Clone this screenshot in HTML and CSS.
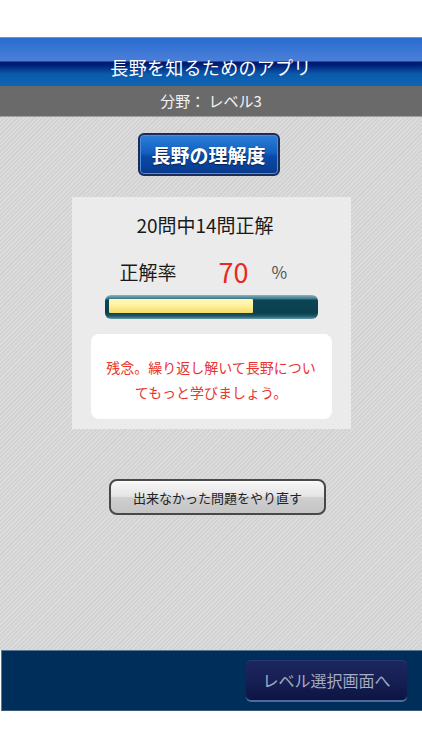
FILE: index.html
```html
<!DOCTYPE html>
<html lang="ja">
<head>
<meta charset="utf-8">
<title>長野を知るためのアプリ</title>
<link rel="stylesheet" href="styles.css">
</head>
<body>
<div class="top-space"></div>
<header class="titlebar"><h1 class="title">長野を知るためのアプリ</h1></header>
<div class="subbar">分野： レベル3</div>
<main class="content">
  <button class="primary-btn">長野の理解度</button>
  <section class="panel">
    <p class="score">20問中14問正解</p>
    <div class="rate-row">
      <span class="rate-label">正解率</span>
      <span class="rate-value">70</span>
      <span class="rate-unit">%</span>
    </div>
    <div class="bar"><div class="bar-fill" style="width:70.5%"></div></div>
    <div class="message">残念。繰り返し解いて長野につい<br>てもっと学びましょう。</div>
  </section>
  <div class="retry-wrap"><button class="retry-btn">出来なかった問題をやり直す</button></div>
</main>
<footer class="footer"><button class="back-btn">レベル選択画面へ</button></footer>
</body>
</html>
```
FILE: styles.css
```css
* { box-sizing: border-box; }
html, body { margin: 0; padding: 0; background: #ffffff; }
body {
  width: 422px;
  font-family: "Noto Sans CJK JP", "Noto Sans", sans-serif;
}
.top-space { height: 37px; }
.titlebar {
  height: 49px;
  background: linear-gradient(to bottom, #2a6cd0 0px, #4a7fd8 23px, #00186c 24px, #001f78 27px, #0b5aac 36px, #1066b4 49px);
  border-top: 1px solid #6a94d8;
  display: flex;
  align-items: center;
  justify-content: center;
  padding-top: 10px;
}
.title {
  margin: 0;
  font-size: 18px;
  font-weight: 400;
  color: #ffffff;
  letter-spacing: 0.3px;
}
.subbar {
  height: 31px;
  background: #6a6a6a;
  border-bottom: 1px solid #a0a0a0;
  color: #f2f2f2;
  font-size: 15px;
  display: flex;
  align-items: center;
  justify-content: center;
  padding-bottom: 1px;
}
.content {
  height: 533px;
  background: repeating-linear-gradient(135deg, #d2d2d2 0px, #d2d2d2 1.5px, #dcdcdc 1.5px, #dcdcdc 3px);
  display: flex;
  flex-direction: column;
  align-items: center;
  padding-top: 16px;
}
.primary-btn {
  width: 142px;
  height: 43px;
  border: 2px solid #1b2d56;
  border-radius: 6px;
  background: linear-gradient(to bottom, #2c7ed8 0%, #1460c0 45%, #0a4aa6 55%, #083a8c 100%);
  box-shadow: inset 0 0 0 1px #4d8de0;
  color: #ffffff;
  font-family: inherit;
  font-size: 19px;
  font-weight: 700;
  text-shadow: 0 1px 1px #0a2050;
  padding: 0;
  margin-right: 5px;
}
.panel {
  margin-top: 21px;
  width: 279px;
  height: 232px;
  background: #ebebeb;
  padding: 14px 19px 9px;
  display: flex;
  flex-direction: column;
}
.score {
  margin: 0;
  text-align: center;
  font-size: 19px;
  line-height: 28px;
  color: #1a1a1a;
  padding-right: 12px;
}
.rate-row {
  margin-top: 14px;
  height: 36px;
  display: flex;
  align-items: center;
}
.rate-label {
  margin-left: 29px;
  font-size: 19px;
  color: #1a1a1a;
}
.rate-value {
  margin-left: 42px;
  font-size: 27px;
  color: #e82a1e;
  line-height: 1;
}
.rate-unit {
  margin-left: 23px;
  font-size: 17px;
  color: #555555;
}
.bar {
  margin: 6px auto 0;
  width: 213px;
  height: 24px;
  border-radius: 6px;
  background: linear-gradient(to bottom, #86b4c2 0px, #3a7486 4px, #0b4656 5px, #0a3f4e 18px, #1b5868 21px, #6a98a6 24px);
  padding: 4px 4px;
}
.bar-fill {
  height: 14px;
  background: linear-gradient(to bottom, #fff9b8 0%, #fff2a0 45%, #f4dc66 100%);
  border-radius: 1px;
}
.message {
  margin-top: 15px;
  height: 85px;
  background: #ffffff;
  border-radius: 8px;
  padding: 21px 8px 0;
  text-align: center;
  color: #e83530;
  font-size: 14px;
  line-height: 25px;
}
.retry-wrap {
  margin-top: 50px;
  padding-left: 13px;
}
.retry-btn {
  width: 217px;
  height: 36px;
  border: 2px solid #484848;
  border-radius: 8px;
  background: linear-gradient(to bottom, #f8f8f8 0%, #e4e4e4 48%, #cfcfcf 52%, #c4c4c4 100%);
  box-shadow: inset 0 1px 0 #ffffff;
  color: #222222;
  font-family: inherit;
  font-size: 13px;
  padding: 0;
}
.footer {
  height: 61px;
  margin-left: 1px;
  background: #002e5a;
  border-top: 1px solid #5a7896;
  border-left: 1px solid #5a7896;
  border-bottom: 1px solid #3a5878;
  display: flex;
  justify-content: flex-end;
  align-items: flex-start;
  padding-top: 9px;
  padding-right: 15px;
}
.back-btn {
  width: 161px;
  height: 40px;
  border: none;
  border-radius: 5px;
  background: linear-gradient(to bottom, #1c2760 0%, #161f52 55%, #0d1444 100%);
  box-shadow: 0 2px 0 #50689a, inset 0 1px 0 #2a3674;
  color: #a4abc2;
  font-family: inherit;
  font-size: 16px;
  padding: 0;
}
```
